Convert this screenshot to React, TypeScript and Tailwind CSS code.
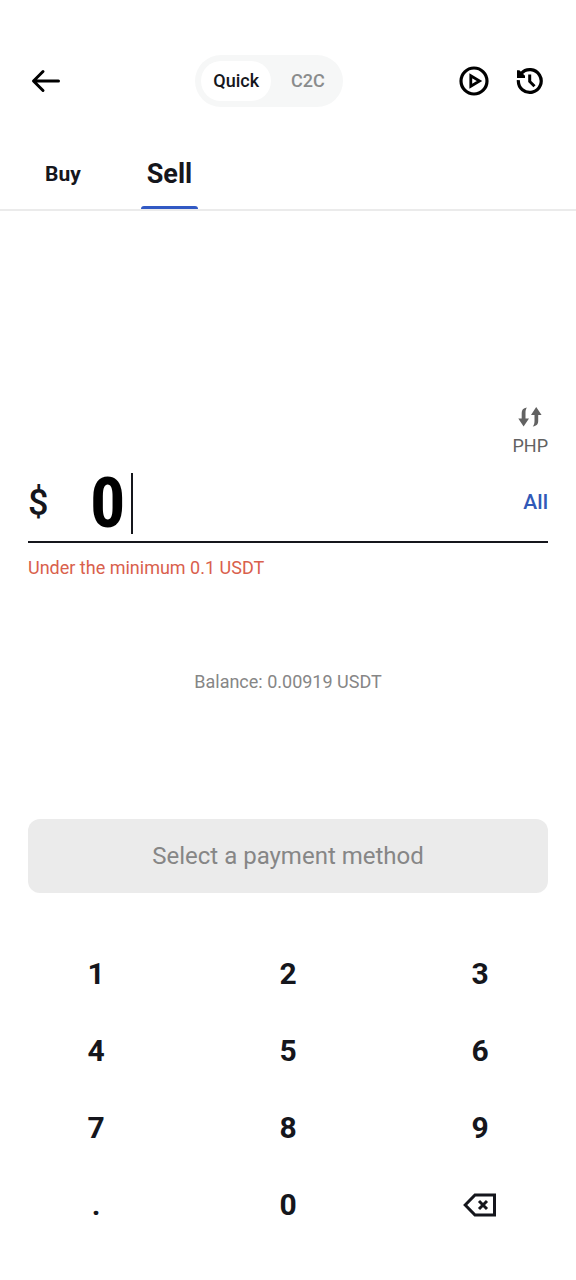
import clsx from "clsx";
import React, { useState } from "react";

const ArrowLeftIcon = () => (
  <svg
    viewBox="0 0 30 24"
    className="w-[30px] h-6"
    fill="none"
    stroke="currentColor"
    strokeWidth="3"
    strokeLinecap="round"
    strokeLinejoin="round"
  >
    <path d="M27.5 12H3M12 2.5 2.5 12l9.5 9.5" />
  </svg>
);

const PlayIcon = () => (
  <svg
    viewBox="0 0 30 30"
    className="w-[30px] h-[30px]"
    fill="none"
    stroke="currentColor"
    strokeWidth="3.2"
  >
    <circle cx="15" cy="15" r="13" />
    <path d="M11.8 9.8v10.4l8.7-5.2z" strokeWidth="2.8" />
  </svg>
);

const HistoryIcon = () => (
  <svg
    viewBox="0 0 28 28"
    className="w-7 h-7"
    fill="none"
    stroke="currentColor"
    strokeWidth="3.2"
  >
    <path d="M2.4 13.2A11.4 11.4 0 1 0 5.2 6.5" />
    <path d="M1 3.2h2.4L9 8.800V11H1z" fill="currentColor" stroke="none" />
    <path d="M13.7 7.5v7l4.800 4.800" strokeWidth="3" />
  </svg>
);

const SwapIcon = () => (
  <svg viewBox="0 0 24 22" className="w-6 h-[22px]" fill="currentColor">
    <path d="M8.8 1.5C7.7 3.5 7.5 5 7.5 7v5.500h3.500L5.600 20.500.3 12.500h3.400V7c0-3 1.500-5 5.100-5.500z" />
    <path d="M18.200 1 23.600 9H20.200v6c0 3-1.500 5-5.400 5.500 1.300-1.800 1.700-3.300 1.700-5.500V9H13z" />
  </svg>
);

const BackspaceIcon = () => (
  <svg
    viewBox="0 0 34 24"
    className="w-[34px] h-6"
    fill="none"
    stroke="currentColor"
    strokeWidth="3"
  >
    <path d="M12 2h19.5v20H12L2.2 12z" />
    <path d="m16 8 8 8M24 8l-8 8" />
  </svg>
);

const modes = ["Quick", "C2C"];
const tabs = ["Buy", "Sell"];
const keys = ["1", "2", "3", "4", "5", "6", "7", "8", "9", ".", "0"];

export default function App() {
  const [mode, setMode] = useState("Quick");
  const [tab, setTab] = useState("Sell");
  const [amount, setAmount] = useState("0");

  const press = (key: string) => {
    if (key === "." && amount.includes(".")) return;
    setAmount(amount === "0" && key !== "." ? key : amount + key);
  };

  return (
    <div className="min-h-screen w-full bg-white font-['Roboto',sans-serif] text-[#15161c] flex flex-col">
      <header className="flex items-center justify-between pt-[55px] pl-[31px] pr-8">
        <button aria-label="Back" className="w-12 text-black">
          <ArrowLeftIcon />
        </button>
        <div className="flex items-center gap-2 rounded-full bg-[#f6f7f7] p-[6px]">
          {modes.map((item) => (
            <button
              key={item}
              onClick={() => setMode(item)}
              className={clsx(
                "h-10 rounded-full px-3 text-lg font-medium",
                mode === item ? "bg-white" : "text-[#8a8c8c]"
              )}
            >
              {item}
            </button>
          ))}
        </div>
        <div className="flex items-center gap-[27px] text-black">
          <button aria-label="Tutorial">
            <PlayIcon />
          </button>
          <button aria-label="History">
            <HistoryIcon />
          </button>
        </div>
      </header>

      <nav className="mt-9 flex items-stretch gap-[54px] border-b-2 border-[#ebebeb] pl-[39px]">
        {tabs.map((item) => (
          <button
            key={item}
            onClick={() => setTab(item)}
            className="flex flex-col items-center"
          >
            <span
              className={clsx(
                "flex h-[63px] items-center px-[6px] font-bold",
                tab === item ? "text-[27px]" : "text-[21px]"
              )}
            >
              {item}
            </span>
            <span
              className={clsx(
                "h-[3px] w-full rounded-t-full",
                tab === item && "bg-[#3159c4]"
              )}
            />
          </button>
        ))}
      </nav>

      <main className="flex flex-col px-7 pt-[195px]">
        <button className="flex flex-col items-center gap-1 self-end text-[#626262]">
          <SwapIcon />
          <span className="text-lg leading-7">PHP</span>
        </button>

        <div className="mt-2 flex h-[75px] items-center border-b-2 border-[#15161c] pb-[3px]">
          <label htmlFor="amount" className="w-[62px] text-[36px] font-medium">
            $
          </label>
          <input
            id="amount"
            inputMode="decimal"
            value={amount}
            onChange={(e) => setAmount(e.target.value)}
            className="field-sizing-content min-w-0 bg-transparent font-['Roboto_Condensed','Roboto',sans-serif] text-[70px] font-bold leading-none text-black caret-transparent outline-none"
          />
          <span className="ml-[6px] h-[61px] w-[2px] bg-[#15161c]" />
          <button
            onClick={() => setAmount("0.00919")}
            className="ml-auto text-[21px] font-medium text-[#3159b8]"
          >
            All
          </button>
        </div>
        <p className="mt-[11px] text-lg leading-7 text-[#d9604c]">
          Under the minimum 0.1 USDT
        </p>

        <p className="mt-[86px] text-center text-lg leading-7 text-[#868686]">
          Balance: 0.00919 USDT
        </p>

        <button className="mt-[123px] h-[74px] rounded-xl bg-[#ebebeb] text-2xl text-[#868686]">
          Select a payment method
        </button>
      </main>

      <div className="mt-[42px] grid grid-cols-3">
        {keys.map((key) => (
          <button
            key={key}
            onClick={() => press(key)}
            className="h-[77px] text-[30px] font-bold"
          >
            {key}
          </button>
        ))}
        <button
          aria-label="Delete"
          onClick={() => setAmount(amount.slice(0, -1) || "0")}
          className="flex h-[77px] items-center justify-center"
        >
          <BackspaceIcon />
        </button>
      </div>
    </div>
  );
}
